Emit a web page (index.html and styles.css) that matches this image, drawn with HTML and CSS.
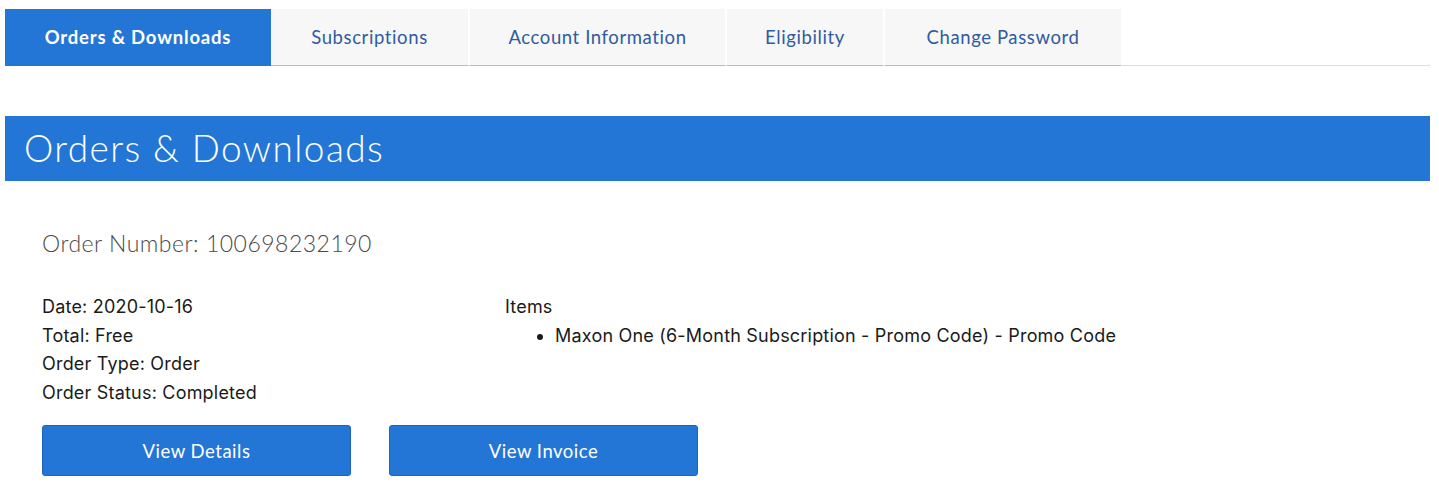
FILE: index.html
```html
<!DOCTYPE html>
<html lang="en">
<head>
<meta charset="utf-8">
<title>Orders &amp; Downloads</title>
<link rel="stylesheet" href="styles.css">
</head>
<body>
<div class="page">
  <nav class="tabs">
    <a class="tab active" href="#">Orders &amp; Downloads</a>
    <a class="tab t-subs" href="#">Subscriptions</a>
    <a class="tab t-acct" href="#">Account Information</a>
    <a class="tab t-elig" href="#">Eligibility</a>
    <a class="tab t-pass" href="#">Change Password</a>
  </nav>
  <h1 class="banner">Orders &amp; Downloads</h1>
  <section class="order">
    <h2 class="order-number">Order Number: 100698232190</h2>
    <div class="order-grid">
      <div class="meta">
        <div>Date: 2020-10-16</div>
        <div>Total: Free</div>
        <div>Order Type: Order</div>
        <div>Order Status: Completed</div>
      </div>
      <div class="items">
        <div>Items</div>
        <ul class="item-list">
          <li>Maxon One (6-Month Subscription - Promo Code) - Promo Code</li>
        </ul>
      </div>
    </div>
    <div class="actions">
      <a class="btn" href="#">View Details</a>
      <a class="btn" href="#">View Invoice</a>
    </div>
  </section>
</div>
</body>
</html>
```
FILE: styles.css
```css
* { box-sizing: border-box; }
html, body { margin: 0; padding: 0; background: #fff; }
body {
  font-family: Lato, "Open Sans", "Liberation Sans", sans-serif;
  color: #1f1f1f;
}
.page {
  width: 1425px;
  margin-left: 5px;
  padding-top: 9px;
}
.tabs {
  display: flex;
  gap: 2px;
  height: 57px;
  border-bottom: 1px solid #dcdde2;
}
.tab {
  display: flex;
  align-items: center;
  justify-content: center;
  height: 57px;
  padding-bottom: 0;
  background: #f7f7f7;
  color: #2f5c9f;
  font-size: 18.5px;
  text-decoration: none;
  border-bottom: 1px solid #a9bed8;
  letter-spacing: 0.6px;
}
.tab.active {
  width: 266px;
  background: #2376d6;
  color: #fff;
  font-weight: 700;
  letter-spacing: 0.8px;
  border-bottom-color: #2376d6;
}
.t-subs { width: 197px; margin-left: -2px; }
.t-acct { width: 255px; }
.t-elig { width: 156px; }
.t-pass { width: 236px; }
.banner {
  margin: 50px 0 0 0;
  height: 65px;
  background: #2376d6;
  color: #fff;
  font-weight: 300;
  font-size: 37px;
  letter-spacing: 1.4px;
  line-height: 63px;
  padding-left: 19px;
}
.order {
  padding-left: 37px;
}
.order-number {
  margin: 46px 0 0 0;
  font-size: 23px;
  font-weight: 300;
  letter-spacing: 0.5px;
  color: #4a4a4a;
  line-height: 32px;
}
.order-grid {
  display: flex;
  margin-top: 34px;
  font-family: Inter, Lato, sans-serif;
  font-size: 18px;
  letter-spacing: 0.2px;
  line-height: 28.5px;
  color: #1a1a1a;
}
.meta { width: 463px; }
.item-list {
  margin: 0;
  padding-left: 50px;
}
.actions {
  display: flex;
  gap: 38px;
  margin-top: 18px;
}
.btn {
  display: flex;
  align-items: center;
  justify-content: center;
  width: 309px;
  height: 51px;
  background: #2376d6;
  border: 1px solid #1c64bb;
  border-radius: 3px;
  color: #fff;
  font-size: 18.5px;
  letter-spacing: 0.5px;
  text-decoration: none;
}
```
